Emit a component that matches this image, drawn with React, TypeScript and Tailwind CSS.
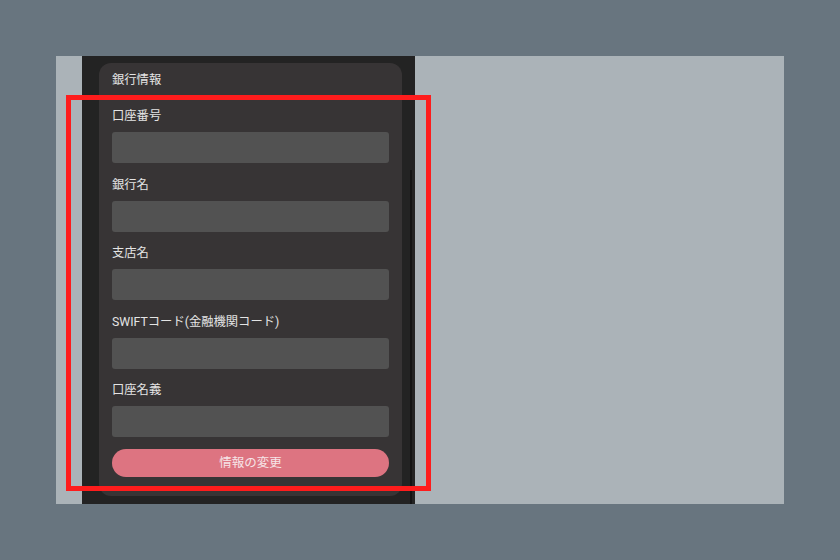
const fields = ["口座番号", "銀行名", "支店名", "SWIFTコード(金融機関コード)", "口座名義"];

export default function App() {
  return (
    <div
      className="relative h-[560px] w-[840px] bg-[#68757f] p-14"
      style={{ fontFamily: 'Roboto, "Noto Sans CJK JP", sans-serif' }}
    >
      <div className="flex h-full w-full overflow-hidden bg-[#abb3b8] pl-[26px]">
        <div className="relative h-full w-[333px] bg-[#232323] pl-[17px] pr-[13px] pt-[7px]">
          <div className="w-[303px] rounded-xl bg-[#373435] px-[13px] pb-[19px] pt-[9px]">
            <h2 className="text-[12.3px] leading-[16px] text-[#e4e4e4]">銀行情報</h2>
            <div className="mt-[20px] flex flex-col gap-[13.5px]">
              {fields.map((label) => (
                <div key={label} className="flex flex-col">
                  <label className="text-[12.3px] leading-[16px] text-[#e4e4e4]">{label}</label>
                  <input className="mt-2 h-[31px] w-full rounded-[3px] bg-[#525252] outline-none" />
                </div>
              ))}
            </div>
            <button className="mt-3 h-7 w-full rounded-full bg-[#dd7481] text-[12.5px] text-[#f6e4e7]">
              情報の変更
            </button>
          </div>
          <div className="absolute bottom-0 right-[3px] top-[114px] w-[2px] bg-[#141414]" />
        </div>
      </div>
      <div className="pointer-events-none absolute left-[66px] top-[95px] h-[396px] w-[365px] border-[5px] border-[#fe1c1c]" />
    </div>
  );
}
